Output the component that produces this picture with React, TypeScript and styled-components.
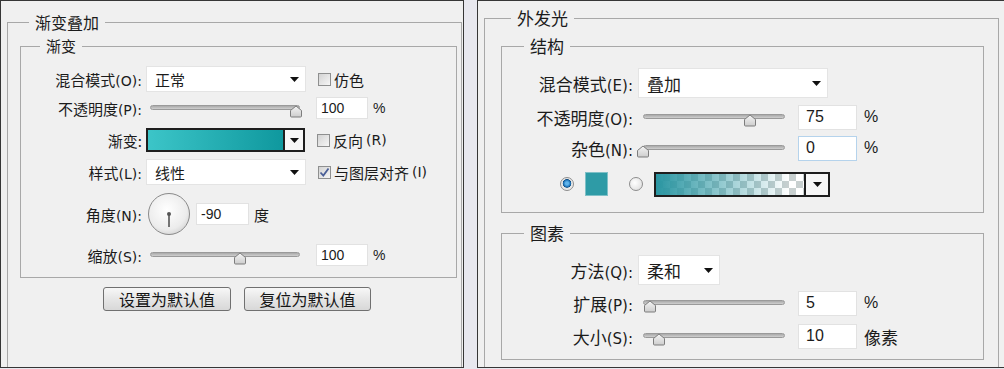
import styled, { createGlobalStyle } from "styled-components";

const GlobalStyle = createGlobalStyle`
  html, body { margin: 0; padding: 0; }
  body {
    background: #e8e8ef;
    font-family: "Noto Sans CJK SC", "Liberation Sans", sans-serif;
    color: #1b1b1b;
  }
`;

// whole strip: two dialog panels side by side
const Screen = styled.div`
  display: flex;
  gap: 13px;
  width: 1004px;
  height: 369px;
  overflow: hidden;
  background: #e8e8ef;
`;

const Panel = styled.div<{ $w: number; $pad: string; $open?: boolean }>`
  flex: none;
  box-sizing: border-box;
  width: ${(p) => p.$w}px;
  height: 368px;
  padding: ${(p) => p.$pad};
  background: #f0f0f0;
  border: 1px solid #363636;
  border-right: ${(p) => (p.$open ? "none" : "1px solid #363636")};
  display: flex;
  flex-direction: column;
  overflow: hidden;
`;

// etched group box; the outer ones run off the bottom of the panel
const Group = styled.section<{ $pad: string; $open?: boolean; $m?: string }>`
  position: relative;
  margin: ${(p) => p.$m ?? "0"};
  padding: ${(p) => p.$pad};
  border: 1px solid #a8a8a8;
  ${(p) => (p.$open ? "border-bottom: none; flex: 1;" : "")}
`;

// caption sitting on the top border line of a group box
const Caption = styled.h3<{ $size: number; $left: number; $lh: number }>`
  position: absolute;
  top: ${(p) => -Math.round(p.$lh / 2) - 1}px;
  left: ${(p) => p.$left}px;
  margin: 0;
  padding: 0 6px;
  background: #f0f0f0;
  font-weight: normal;
  font-size: ${(p) => p.$size}px;
  line-height: ${(p) => p.$lh}px;
`;

const Row = styled.div<{ $h: number; $indent?: number }>`
  display: flex;
  align-items: center;
  height: ${(p) => p.$h}px;
  padding-left: ${(p) => p.$indent ?? 0}px;
`;

const Label = styled.span<{ $w: number; $big?: boolean }>`
  flex: none;
  width: ${(p) => p.$w}px;
  margin-right: ${(p) => (p.$big ? 5 : 4)}px;
  text-align: right;
  white-space: nowrap;
  font-size: ${(p) => (p.$big ? 17 : 15)}px;
`;

const Key = styled.span<{ $big?: boolean }>`
  font-family: "DejaVu Sans", "Liberation Sans", sans-serif;
  font-size: ${(p) => (p.$big ? 15 : 14)}px;
`;

const Select = styled.div<{ $w: number; $big?: boolean }>`
  flex: none;
  box-sizing: border-box;
  width: ${(p) => p.$w}px;
  height: ${(p) => (p.$big ? 30 : 26)}px;
  display: flex;
  align-items: center;
  justify-content: space-between;
  padding: 0 6px 0 8px;
  background: #fff;
  border: 1px solid #e4e4e4;
  font-size: ${(p) => (p.$big ? 17 : 15)}px;
`;

const Slider = styled.div<{ $w: number; $inset: number; $track: number }>`
  flex: none;
  position: relative;
  width: ${(p) => p.$w}px;
  height: 24px;

  &::before {
    content: "";
    position: absolute;
    left: ${(p) => p.$inset}px;
    top: 9px;
    width: ${(p) => p.$track}px;
    height: 5px;
    box-sizing: border-box;
    border-radius: 3px;
    border: 1px solid #9a9a9a;
    background: linear-gradient(#a9a9a9, #cfcfcf);
  }
`;

const Thumb = styled.svg`
  position: absolute;
  top: 9px;
`;

const NumBox = styled.div<{ $w: number; $big?: boolean; $focus?: boolean; $ml?: number }>`
  flex: none;
  box-sizing: border-box;
  width: ${(p) => p.$w}px;
  height: ${(p) => (p.$big ? 25 : 22)}px;
  margin-left: ${(p) => p.$ml ?? 10}px;
  padding-left: ${(p) => (p.$big ? 7 : 4)}px;
  display: flex;
  align-items: center;
  background: #fff;
  border: 1px solid ${(p) => (p.$focus ? "#b5d3ec" : "#e2e2e2")};
  font-family: "Liberation Sans", sans-serif;
  font-size: ${(p) => (p.$big ? 16 : 14)}px;
`;

const Unit = styled.span<{ $big?: boolean }>`
  margin-left: ${(p) => (p.$big ? 7 : 5)}px;
  font-size: ${(p) => (p.$big ? 17 : 15)}px;
`;

const Pct = styled.span<{ $big?: boolean }>`
  margin-left: ${(p) => (p.$big ? 7 : 5)}px;
  font-family: "Liberation Sans", sans-serif;
  font-size: ${(p) => (p.$big ? 16 : 14)}px;
`;

const Check = styled.label`
  display: flex;
  align-items: center;
  gap: 3px;
  margin-left: 12px;
  font-size: 15px;
  white-space: nowrap;
`;

const Box = styled.span`
  flex: none;
  box-sizing: border-box;
  width: 13px;
  height: 13px;
  display: flex;
  align-items: center;
  justify-content: center;
  border: 1px solid #8e8f8f;
  background: linear-gradient(135deg, #d3d3d3, #f6f6f6);
`;

const GradientBar = styled.div<{ $w: number; $h: number; $ml?: number }>`
  flex: none;
  box-sizing: border-box;
  display: flex;
  width: ${(p) => p.$w}px;
  height: ${(p) => p.$h}px;
  margin-left: ${(p) => p.$ml ?? 0}px;
  border: 2px solid #1e1e1e;
`;

const GradFill = styled.div<{ $fill: string }>`
  flex: 1;
  background: ${(p) => p.$fill};
`;

const DropBtn = styled.div<{ $w: number }>`
  flex: none;
  width: ${(p) => p.$w}px;
  display: flex;
  align-items: center;
  justify-content: center;
  border-left: 2px solid #1e1e1e;
  background: #f7f7f7;
`;

const Swatch = styled.div`
  flex: none;
  box-sizing: border-box;
  width: 23px;
  height: 24px;
  margin-left: 11px;
  background: #2e9ba6;
  border: 1px solid #7fc0c7;
`;

const Radio = styled.span<{ $on?: boolean; $ml?: number }>`
  flex: none;
  box-sizing: border-box;
  width: 14px;
  height: 14px;
  margin-left: ${(p) => p.$ml ?? 0}px;
  border-radius: 50%;
  border: 1px solid #8d8d8d;
  background: ${(p) =>
    p.$on
      ? "radial-gradient(circle at 50% 45%, #5fb4ec 0 1.5px, #1a6fb4 3.5px, #0f4f86 4px, #e4e4e4 4.6px, #fafafa)"
      : "radial-gradient(circle at 40% 40%, #ffffff, #d9d9d9)"};
`;

const Dial = styled.svg`
  flex: none;
  margin-left: 1px;
`;

const ButtonRow = styled.div`
  display: flex;
  gap: 13px;
  padding-left: 95px;
  margin-top: 9px;
`;

const Button = styled.button<{ $w: number }>`
  width: ${(p) => p.$w}px;
  height: 24px;
  padding: 0;
  border: 1px solid #707070;
  border-radius: 3px;
  background: linear-gradient(#f7f7f7, #e6e6e6 50%, #d8d8d8);
  font-family: inherit;
  font-size: 16px;
  line-height: 1;
  color: #151515;
`;

const Arrow = () => (
  <svg width="9" height="5" viewBox="0 0 9 5">
    <path d="M0 0H9L4.5 5Z" fill="#111" />
  </svg>
);

const Tick = () => (
  <svg width="11" height="11" viewBox="0 0 11 11">
    <path d="M1.5 5.5L4.3 8.5L9.5 1.5" fill="none" stroke="#4a5f97" strokeWidth="1.8" />
  </svg>
);

function Range({ w, inset, track, pct }: { w: number; inset: number; track: number; pct: number }) {
  const x = inset + pct * track - 7;
  return (
    <Slider $w={w} $inset={inset} $track={track}>
      <Thumb width="14" height="13" viewBox="0 0 14 13" style={{ left: x }}>
        <defs>
          <linearGradient id="tg" x1="0" y1="0" x2="0" y2="1">
            <stop offset="0" stopColor="#f5f5f5" />
            <stop offset="1" stopColor="#cdcdcd" />
          </linearGradient>
        </defs>
        <path
          d="M1.5 11V5.5L7 1L12.5 5.5V11Q12.5 12 11.5 12H2.5Q1.5 12 1.5 11Z"
          fill="url(#tg)"
          stroke="#7d7d7d"
        />
      </Thumb>
    </Slider>
  );
}

const teal = "linear-gradient(to right, #3cc5c8, #0f989e)";
const fade =
  "linear-gradient(to right, #2a96a2, rgba(42,150,162,0) 90%), repeating-conic-gradient(#c8d0d0 0 25%, #ffffff 0 50%) 0 0 / 14px 14px";

export default function App() {
  return (
    <>
      <GlobalStyle />
      <Screen>
        <Panel $w={464} $pad="21px 1px 0 6px">
          <Group $pad="23px 0 0 0" $open>
            <Caption $size={16} $lh={20} $left={21}>渐变叠加</Caption>
            <Group $pad="19px 0 7px 0" $m="0 4px 0 12px">
              <Caption $size={15} $lh={20} $left={19}>渐变</Caption>
              <Row $h={26}>
                <Label $w={121}>混合模式<Key>(O):</Key></Label>
                <Select $w={160}>正常<Arrow /></Select>
                <Check><Box />仿色</Check>
              </Row>
              <Row $h={32}>
                <Label $w={121}>不透明度<Key>(P):</Key></Label>
                <Range w={160} inset={4} track={150} pct={0.97} />
                <NumBox $w={52}>100</NumBox>
                <Pct>%</Pct>
              </Row>
              <Row $h={32}>
                <Label $w={121}>渐变:</Label>
                <GradientBar $w={159} $h={24}>
                  <GradFill $fill={teal} />
                  <DropBtn $w={18}><Arrow /></DropBtn>
                </GradientBar>
                <Check><Box />反向<Key>(R)</Key></Check>
              </Row>
              <Row $h={32}>
                <Label $w={121}>样式<Key>(L):</Key></Label>
                <Select $w={160}>线性<Arrow /></Select>
                <Check><Box><Tick /></Box>与图层对齐<Key>(I)</Key></Check>
              </Row>
              <Row $h={52}>
                <Label $w={121}>角度<Key>(N):</Key></Label>
                <Dial width="44" height="44" viewBox="0 0 44 44">
                  <defs>
                    <radialGradient id="dg" cx="0.45" cy="0.4" r="0.6">
                      <stop offset="0" stopColor="#ffffff" />
                      <stop offset="0.8" stopColor="#ececec" />
                      <stop offset="1" stopColor="#dadada" />
                    </radialGradient>
                  </defs>
                  <circle cx="22" cy="22" r="20.5" fill="url(#dg)" stroke="#8a8a8a" />
                  <line x1="22" y1="22" x2="22" y2="35" stroke="#555" strokeWidth="1.6" />
                  <circle cx="22" cy="22" r="2" fill="#555" />
                </Dial>
                <NumBox $w={53} $ml={5}>-90</NumBox>
                <Unit>度</Unit>
              </Row>
              <Row $h={30}>
                <Label $w={121}>缩放<Key>(S):</Key></Label>
                <Range w={160} inset={4} track={150} pct={0.6} />
                <NumBox $w={52}>100</NumBox>
                <Pct>%</Pct>
              </Row>
            </Group>
            <ButtonRow>
              <Button $w={128}>设置为默认值</Button>
              <Button $w={127}>复位为默认值</Button>
            </ButtonRow>
          </Group>
        </Panel>

        <Panel $w={527} $pad="17px 5px 0 6px" $open>
          <Group $pad="27px 0 0 0" $open>
            <Caption $size={17} $lh={22} $left={26}>外发光</Caption>
            <Group $pad="21px 0 4px 0" $m="0 14px 0 16px">
              <Caption $size={17} $lh={22} $left={22}>结构</Caption>
              <Row $h={30}>
                <Label $w={131} $big>混合模式<Key $big>(E):</Key></Label>
                <Select $w={190} $big>叠加<Arrow /></Select>
              </Row>
              <Row $h={38}>
                <Label $w={131} $big>不透明度<Key $big>(O):</Key></Label>
                <Range w={150} inset={5} track={142} pct={0.75} />
                <NumBox $w={59} $big>75</NumBox>
                <Pct $big>%</Pct>
              </Row>
              <Row $h={24}>
                <Label $w={131} $big>杂色<Key $big>(N):</Key></Label>
                <Range w={150} inset={5} track={142} pct={0} />
                <NumBox $w={59} $big $focus>0</NumBox>
                <Pct $big>%</Pct>
              </Row>
              <Row $h={48} $indent={58}>
                <Radio $on />
                <Swatch />
                <Radio $ml={21} />
                <GradientBar $w={176} $h={25} $ml={11}>
                  <GradFill $fill={fade} />
                  <DropBtn $w={22}><Arrow /></DropBtn>
                </GradientBar>
              </Row>
            </Group>
            <Group $pad="21px 0 8px 0" $m="20px 14px 0 16px">
              <Caption $size={17} $lh={22} $left={22}>图素</Caption>
              <Row $h={30}>
                <Label $w={131} $big>方法<Key $big>(Q):</Key></Label>
                <Select $w={82} $big>柔和<Arrow /></Select>
              </Row>
              <Row $h={36}>
                <Label $w={131} $big>扩展<Key $big>(P):</Key></Label>
                <Range w={150} inset={5} track={142} pct={0.05} />
                <NumBox $w={59} $big>5</NumBox>
                <Pct $big>%</Pct>
              </Row>
              <Row $h={30}>
                <Label $w={131} $big>大小<Key $big>(S):</Key></Label>
                <Range w={150} inset={5} track={142} pct={0.11} />
                <NumBox $w={59} $big>10</NumBox>
                <Unit $big>像素</Unit>
              </Row>
            </Group>
          </Group>
        </Panel>
      </Screen>
    </>
  );
}
